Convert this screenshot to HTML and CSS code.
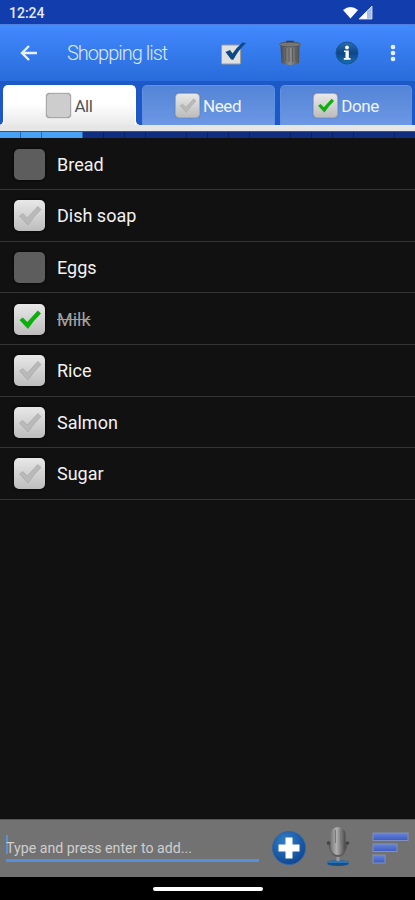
FILE: index.html
```html
<!DOCTYPE html>
<html lang="en">
<head>
    <meta charset="UTF-8">
    <meta name="viewport" content="width=device-width, initial-scale=1.0">
    <title>Shopping list</title>
    <link rel="stylesheet" href="styles.css">
</head>
<body>
    <!-- Shared icons -->
    <svg class="defs" width="0" height="0">
        <defs>
            <linearGradient id="can-fill">
                <stop offset="0" stop-color="#474747"/>
                <stop offset=".5" stop-color="#8d8d8d"/>
                <stop offset="1" stop-color="#4c4c4c"/>
            </linearGradient>
            <linearGradient id="mic-fill">
                <stop offset="0" stop-color="#777"/>
                <stop offset=".4" stop-color="#b0b0b0"/>
                <stop offset="1" stop-color="#484848"/>
            </linearGradient>
            <linearGradient id="info-fill" x1="0" y1="0" x2="0" y2="1">
                <stop offset="0" stop-color="#286eae"/>
                <stop offset=".5" stop-color="#0d4589"/>
                <stop offset="1" stop-color="#176fae"/>
            </linearGradient>
            <radialGradient id="add-fill" cx=".4" cy=".3" r=".75">
                <stop offset="0" stop-color="#3580c8"/>
                <stop offset="1" stop-color="#0b4390"/>
            </radialGradient>
            <linearGradient id="bar-fill" x1="0" y1="0" x2="0" y2="1">
                <stop offset="0" stop-color="#6584dc"/>
                <stop offset="1" stop-color="#3d5bc0"/>
            </linearGradient>
        </defs>
        <symbol id="check" viewBox="0 0 31 31">
            <path d="M5.500 16L8.800 13.500L13.300 18L23.800 6.500L27 9.500Q20 16 14 25Q10 21 5.500 16Z" stroke-linejoin="round"/>
        </symbol>
    </svg>

    <div class="status-bar">
        <span>12:24</span>
        <svg class="signal" width="32" height="16" viewBox="0 0 32 16">
            <path d="M1 5Q8.500-1 16 5L8.500 13.500Z" fill="#fff"/>
            <path d="M17 14L30 1V14Z" fill="#a9bce8"/>
            <path d="M17 14L25 6V14Z" fill="#fff"/>
            <path d="M17 14L30 1V14Z" fill="none" stroke="#dfe6fa" stroke-width=".8"/>
        </svg>
    </div>

    <div class="toolbar">
        <svg class="back" width="20" height="20" viewBox="0 0 20 20">
            <path d="M18 10H3M10 3L3 10L10 17" fill="none" stroke="#e6f0ff" stroke-width="2.400"/>
        </svg>
        <h1>Shopping list</h1>
        <svg class="check-all" width="28" height="28" viewBox="0 0 28 28">
            <rect x="2.500" y="6" width="19" height="19" rx="1" fill="#e0e0e0" stroke="#9a9a9a"/>
            <path d="M6.500 13L11 11L13.500 14.500Q18 8 23.500 3.500L27 4Q19.500 11 14.500 20.500Q12 21.500 11 19Z" fill="#0b4a86"/>
        </svg>
        <svg class="trash" width="24" height="28" viewBox="0 0 24 28">
            <path d="M2.500 7H21.500L21 24Q12 28 3.500 24Z" fill="url(#can-fill)"/>
            <path d="M7.500 9V22M11 9V23M14.500 9V23M18 9V21" stroke="#5b5b5b" stroke-width="1"/>
            <ellipse cx="12" cy="5.500" rx="10.500" ry="2.500" fill="#777" stroke="#555"/>
            <path d="M9 3.500V2.500H15V3.500" fill="none" stroke="#3b3b3b" stroke-width="1.500"/>
        </svg>
        <svg class="info" width="24" height="24" viewBox="0 0 24 24">
            <circle cx="12" cy="12" r="11" fill="url(#info-fill)" stroke="#195391"/>
            <circle cx="12" cy="6.500" r="1.900" fill="#fff"/>
            <path d="M9 9.500H13.800V17H15.500V18.800H8.800V17H10.500V11H9Z" fill="#fff"/>
        </svg>
        <svg class="more" width="6" height="20" viewBox="0 0 6 20">
            <g fill="#e6f0ff">
                <circle cx="3" cy="4" r="2.300"/>
                <circle cx="3" cy="10" r="2.300"/>
                <circle cx="3" cy="16" r="2.300"/>
            </g>
        </svg>
    </div>

    <div class="tabs">
        <div class="tab active"><span class="box plain"></span>All</div>
        <div class="tab"><span class="box need"><svg><use href="#check"/></svg></span>Need</div>
        <div class="tab"><span class="box done"><svg><use href="#check"/></svg></span>Done</div>
    </div>
    <div class="progress"><div class="progress-fill"></div></div>

    <ul class="list">
        <li><span class="box off"></span>Bread</li>
        <li><span class="box need"><svg><use href="#check"/></svg></span>Dish soap</li>
        <li><span class="box off"></span>Eggs</li>
        <li class="bought"><span class="box done"><svg><use href="#check"/></svg></span><s>Milk</s></li>
        <li><span class="box need"><svg><use href="#check"/></svg></span>Rice</li>
        <li><span class="box need"><svg><use href="#check"/></svg></span>Salmon</li>
        <li><span class="box need"><svg><use href="#check"/></svg></span>Sugar</li>
    </ul>

    <div class="add-bar">
        <div class="field">Type and press enter to add...</div>
        <svg class="add" width="36" height="36" viewBox="0 0 36 36">
            <circle cx="18" cy="17" r="16.500" fill="url(#add-fill)" stroke="#2f65a5"/>
            <path d="M14.500 6.500H21.500V13.500H28.500V20.500H21.500V27.500H14.500V20.500H7.500V13.500H14.500Z" fill="#fff"/>
        </svg>
        <svg class="mic" width="24" height="42" viewBox="0 0 24 42">
            <path d="M1.500 35.500Q12 33 22.500 35.500V38.500Q12 41.500 1.500 38.500Z" fill="#174f8c"/>
            <path d="M1.500 35.500Q12 33 22.500 35.500V37H1.500Z" fill="#2d74b5"/>
            <path d="M10.500 28H13.500V35H10.500Z" fill="#999"/>
            <path d="M2 16Q4 31 12 31Q20 31 22 16" fill="#5c5c5c"/>
            <rect x="4.500" y="1" width="15" height="28" rx="7.500" fill="url(#mic-fill)"/>
            <path d="M9.500 4V17M14.500 4V17" stroke="#777" stroke-width="1"/>
            <circle cx="2.500" cy="17" r="1.800" fill="#444"/>
            <circle cx="21.500" cy="17" r="1.800" fill="#444"/>
        </svg>
        <svg class="sort" width="38" height="34" viewBox="0 0 38 34">
            <g fill="url(#bar-fill)" stroke="#8390b8" stroke-width="1">
                <rect x="1" y="1" width="35" height="7.500"/>
                <rect x="1" y="12" width="24" height="7.500"/>
                <rect x="1" y="23" width="12" height="8"/>
            </g>
        </svg>
    </div>
    <div class="nav-bar"><div class="pill"></div></div>
</body>
</html>
```

FILE: styles.css
```css
* {
    box-sizing: border-box;
}

body {
    margin: 0;
    height: 900px;
    display: flex;
    flex-direction: column;
    overflow: hidden;
    background-color: #111;
    color: #f2f2f2;
    font-family: Roboto, sans-serif;
}

.defs {
    position: absolute;
}

svg {
    display: block;
    flex-shrink: 0;
}

.status-bar {
    height: 24px;
    padding: 2px 41px 0 9px;
    display: flex;
    justify-content: space-between;
    align-items: center;
    background-color: #123dac;
    color: #e4e9fa;
    font-size: 14px;
    font-weight: 500;
}

.toolbar {
    height: 57px;
    padding-left: 19px;
    display: flex;
    align-items: center;
    border-top: 1px solid #4e80e0;
    background: linear-gradient(#438aff, #286bda);
}

.toolbar h1 {
    width: 125px;
    margin: 0 0 0 28px;
    color: #dde9ff;
    font-size: 20px;
    font-weight: 300;
    letter-spacing: -1px;
    white-space: nowrap;
}

.check-all {
    margin-left: 27px;
}

.trash {
    margin-left: 31px;
}

.info {
    margin-left: 33px;
}

.more {
    margin-left: 31px;
}

.tabs {
    height: 50px;
    padding: 4px 3px 0;
    display: grid;
    grid-template-columns: 133px 133px 132px;
    column-gap: 5.5px;
    border-bottom: 6px solid #e6e6e6;
    background-color: #1c59c7;
}

.tab {
    display: flex;
    justify-content: center;
    align-items: center;
    gap: 3px;
    border: 1px solid #6191e2;
    border-bottom: none;
    border-radius: 5px 5px 0 0;
    background: linear-gradient(#5484d7, #6c98e4);
    color: #f0f5ff;
    font-size: 17px;
    letter-spacing: -0.4px;
}

.tab.active {
    position: relative;
    border-color: #fff;
    background: linear-gradient(#fff 45%, #e9e9e9);
    color: #555;
}

/* flared foot on both sides of the open tab */
.tab.active::before,
.tab.active::after {
    content: "";
    position: absolute;
    bottom: 0;
    width: 4px;
    height: 4px;
}

.tab.active::before {
    left: -5px;
    background: radial-gradient(circle at 0 0, transparent 3.5px, #e9e9e9 4px);
}

.tab.active::after {
    right: -5px;
    background: radial-gradient(circle at 100% 0, transparent 3.5px, #e9e9e9 4px);
}

.box {
    width: 31px;
    height: 31px;
    flex-shrink: 0;
    border-radius: 5px;
    background: linear-gradient(#e8e8e8, #bdbdbd);
    box-shadow: 0 0 3px #000;
}

.box svg {
    width: 100%;
    height: 100%;
}

.tab .box {
    width: 25px;
    height: 25px;
    border: 1px solid #aaa;
    border-radius: 4px;
    box-shadow: 0 0 1px #555;
}

.box.plain {
    background: #cdcdcd;
}

.box.off {
    background: #5d5d5d;
}

.box.need {
    fill: #b9b9b9;
    stroke: #a2a2a2;
    stroke-width: 0.6px;
}

.box.done {
    fill: #0caf0c;
}

.progress {
    height: 7px;
    border-top: 1px solid #39537d;
    background: repeating-linear-gradient(90deg, #102d80 0 20px, #0a2163 20px 20.8px);
}

.progress-fill {
    width: 20%;
    height: 100%;
    background: repeating-linear-gradient(90deg, #48a2f3 0 20px, #2868b5 20px 20.8px);
}

.list {
    flex: 1;
    margin: 0;
    padding: 0.6px 0 0;
    list-style: none;
}

.list li {
    height: 51.6px;
    padding: 1px 0 0 14px;
    display: flex;
    align-items: center;
    gap: 12px;
    border-bottom: 1px solid #343434;
    font-size: 18px;
}

.list .bought {
    color: #a0a0a0;
}

.add-bar {
    height: 58px;
    padding-left: 6px;
    display: flex;
    align-items: center;
    border-top: 1px solid #555;
    background-color: #727272;
}

.field {
    width: 253px;
    height: 27px;
    padding-top: 5px;
    border-bottom: 3px solid #568fdc;
    background: linear-gradient(#568fdc, #568fdc) 0 0 / 2px 19px no-repeat;
    color: #cecece;
    font-size: 14.2px;
    line-height: 17px;
}

.add {
    margin-left: 12px;
}

.mic {
    margin-left: 19px;
    margin-top: -3px;
}

.sort {
    margin-left: 22px;
}

.nav-bar {
    height: 23px;
    display: flex;
    justify-content: center;
    align-items: center;
    background-color: #000;
}

.pill {
    width: 110px;
    height: 4px;
    border-radius: 2px;
    background-color: #fff;
}
```
